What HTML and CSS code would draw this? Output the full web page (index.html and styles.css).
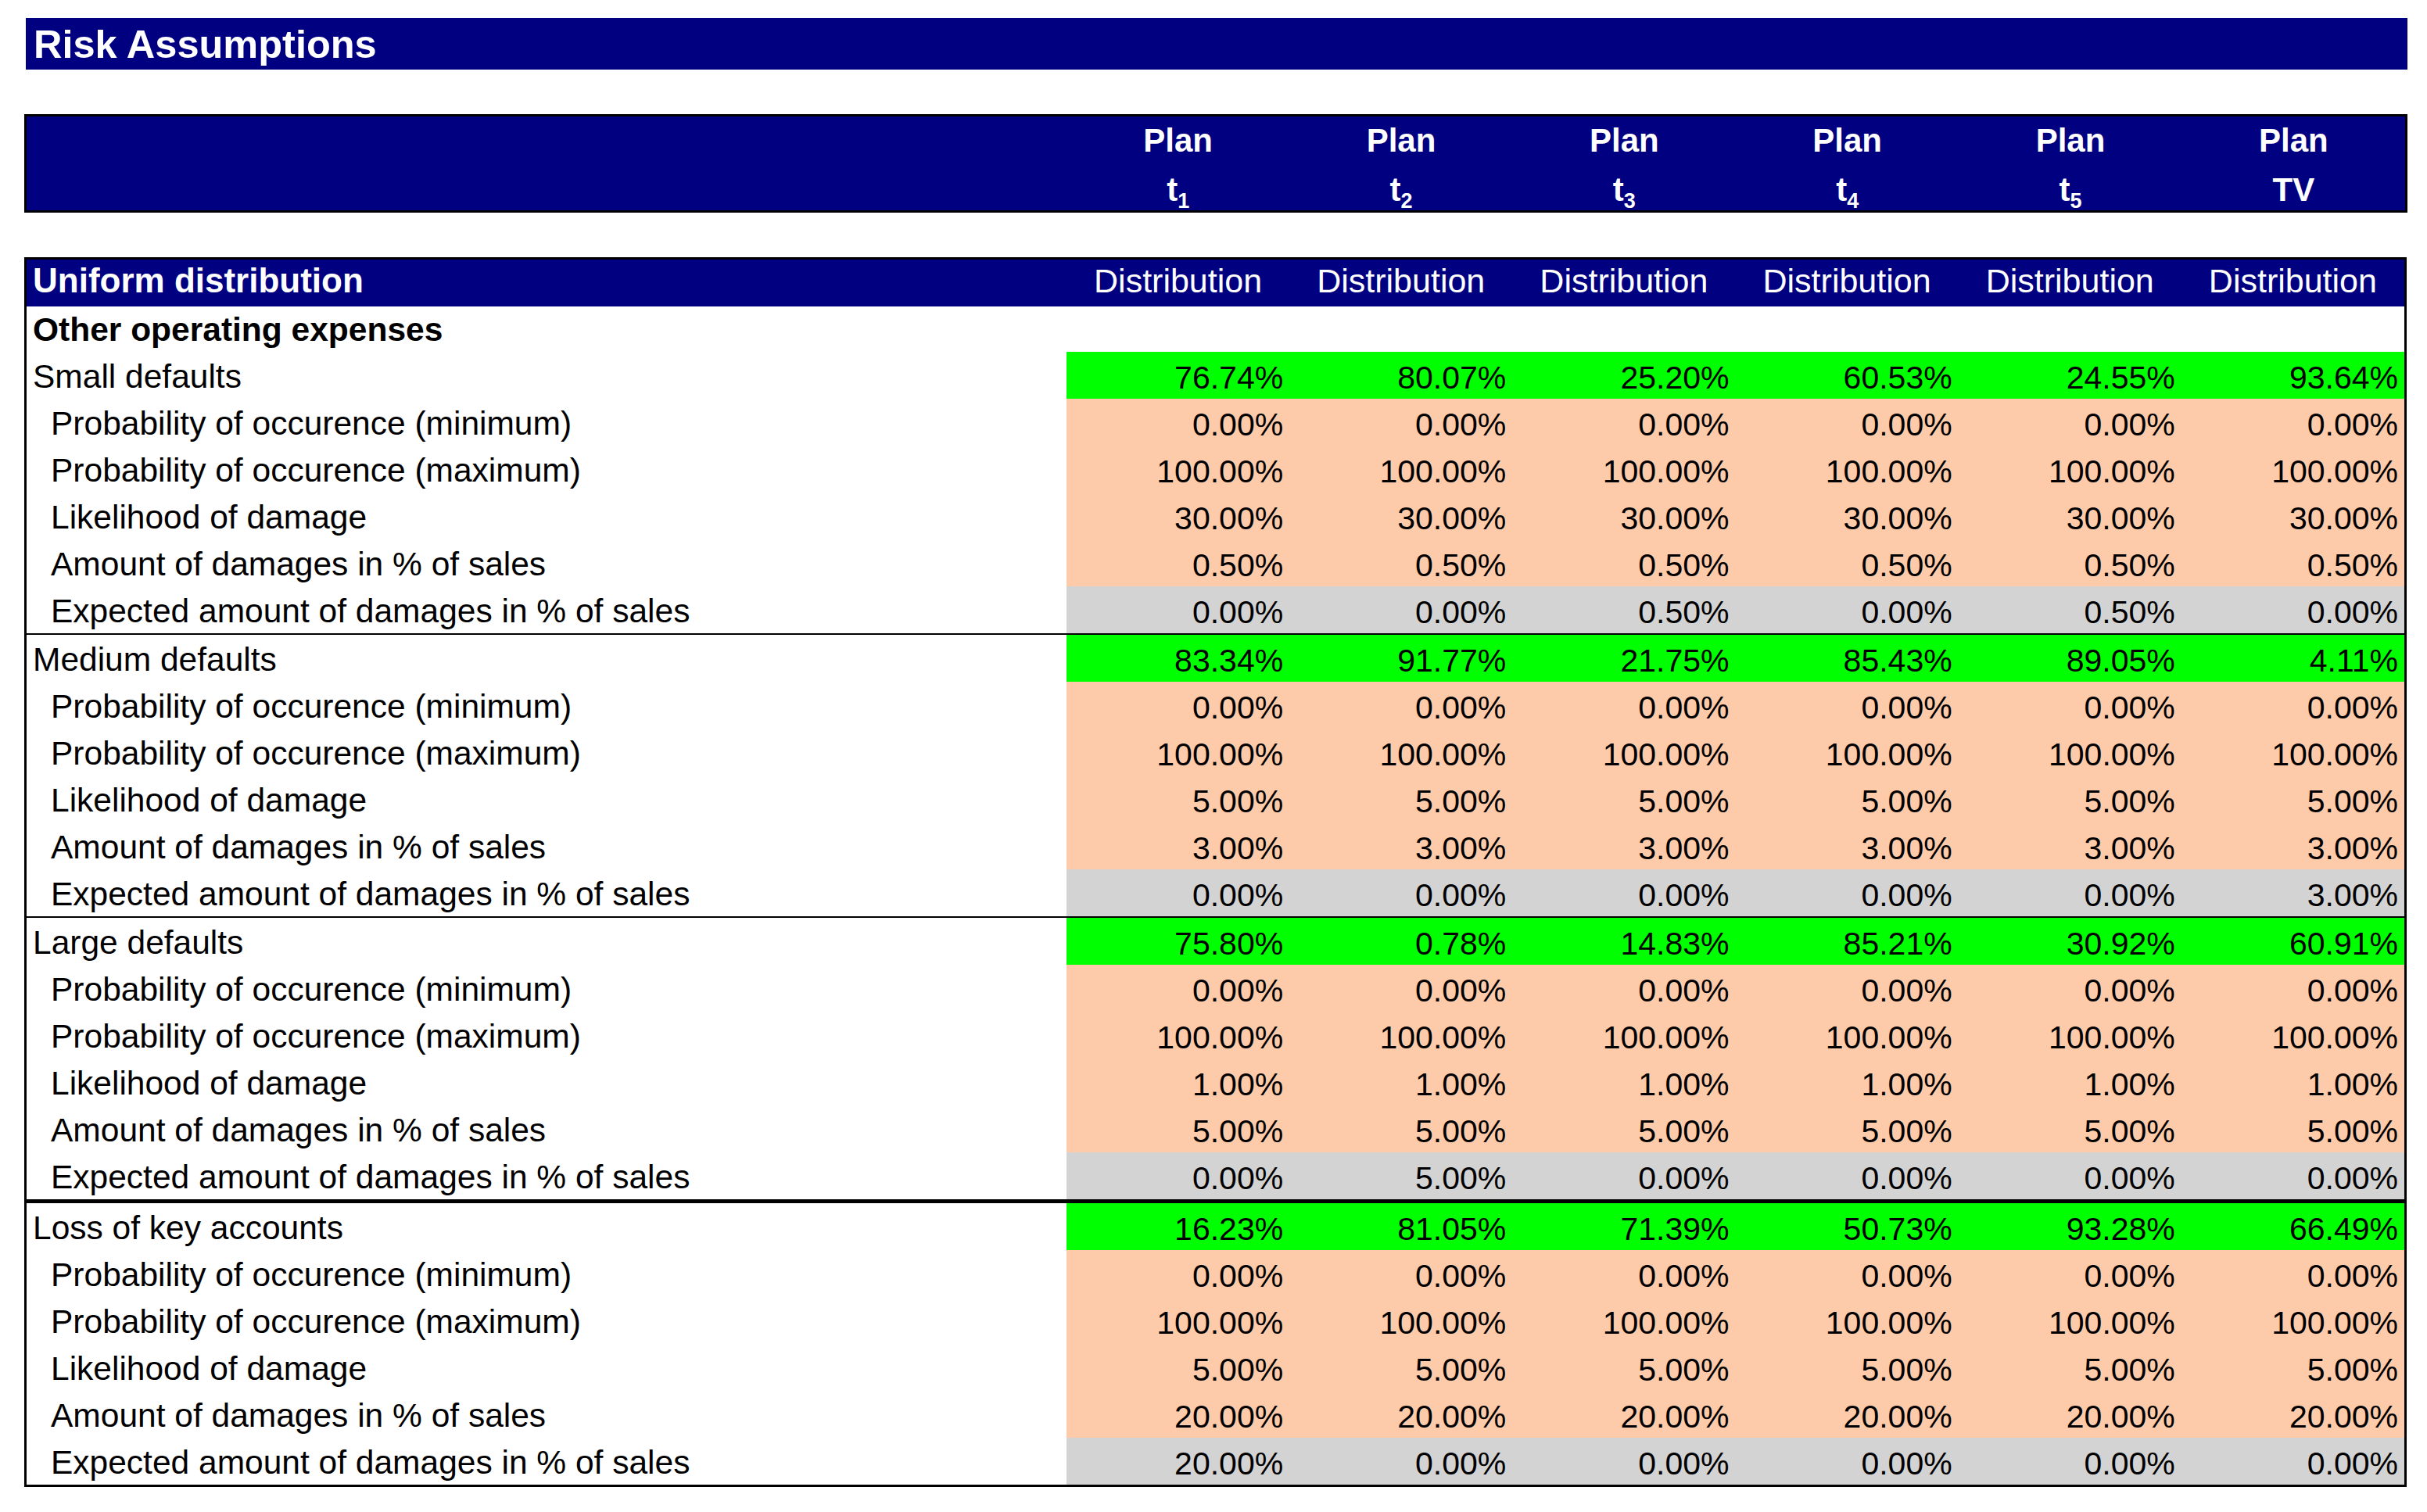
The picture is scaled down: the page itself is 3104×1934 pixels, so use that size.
FILE: index.html
```html
<!DOCTYPE html>
<html>
<head>
<meta charset="utf-8">
<title>Risk Assumptions</title>
<link rel="stylesheet" href="styles.css">
</head>
<body>
<div class="sheet">
  <div class="title">Risk Assumptions</div>

  <div class="plan-head">
    <div></div>
    <div class="plan-col"><span>Plan</span><span>t<sub>1</sub></span></div>
    <div class="plan-col"><span>Plan</span><span>t<sub>2</sub></span></div>
    <div class="plan-col"><span>Plan</span><span>t<sub>3</sub></span></div>
    <div class="plan-col"><span>Plan</span><span>t<sub>4</sub></span></div>
    <div class="plan-col"><span>Plan</span><span>t<sub>5</sub></span></div>
    <div class="plan-col"><span>Plan</span><span>TV</span></div>
  </div>

  <div class="table">
    <div class="hrow">
      <div class="hlbl">Uniform distribution</div>
      <div class="dist">Distribution</div>
      <div class="dist">Distribution</div>
      <div class="dist">Distribution</div>
      <div class="dist">Distribution</div>
      <div class="dist">Distribution</div>
      <div class="dist">Distribution</div>
    </div>
    <div class="row other">
      <div class="lbl bold">Other operating expenses</div>
    </div>

    <div class="grp">
      <div class="row"><div class="lbl">Small defaults</div><div class="c g">76.74%</div><div class="c g">80.07%</div><div class="c g">25.20%</div><div class="c g">60.53%</div><div class="c g">24.55%</div><div class="c g">93.64%</div></div>
      <div class="row"><div class="lbl ind">Probability of occurence (minimum)</div><div class="c p">0.00%</div><div class="c p">0.00%</div><div class="c p">0.00%</div><div class="c p">0.00%</div><div class="c p">0.00%</div><div class="c p">0.00%</div></div>
      <div class="row"><div class="lbl ind">Probability of occurence (maximum)</div><div class="c p">100.00%</div><div class="c p">100.00%</div><div class="c p">100.00%</div><div class="c p">100.00%</div><div class="c p">100.00%</div><div class="c p">100.00%</div></div>
      <div class="row"><div class="lbl ind">Likelihood of damage</div><div class="c p">30.00%</div><div class="c p">30.00%</div><div class="c p">30.00%</div><div class="c p">30.00%</div><div class="c p">30.00%</div><div class="c p">30.00%</div></div>
      <div class="row"><div class="lbl ind">Amount of damages in % of sales</div><div class="c p">0.50%</div><div class="c p">0.50%</div><div class="c p">0.50%</div><div class="c p">0.50%</div><div class="c p">0.50%</div><div class="c p">0.50%</div></div>
      <div class="row"><div class="lbl ind">Expected amount of damages in % of sales</div><div class="c x">0.00%</div><div class="c x">0.00%</div><div class="c x">0.50%</div><div class="c x">0.00%</div><div class="c x">0.50%</div><div class="c x">0.00%</div></div>
    </div>

    <div class="grp">
      <div class="row"><div class="lbl">Medium defaults</div><div class="c g">83.34%</div><div class="c g">91.77%</div><div class="c g">21.75%</div><div class="c g">85.43%</div><div class="c g">89.05%</div><div class="c g">4.11%</div></div>
      <div class="row"><div class="lbl ind">Probability of occurence (minimum)</div><div class="c p">0.00%</div><div class="c p">0.00%</div><div class="c p">0.00%</div><div class="c p">0.00%</div><div class="c p">0.00%</div><div class="c p">0.00%</div></div>
      <div class="row"><div class="lbl ind">Probability of occurence (maximum)</div><div class="c p">100.00%</div><div class="c p">100.00%</div><div class="c p">100.00%</div><div class="c p">100.00%</div><div class="c p">100.00%</div><div class="c p">100.00%</div></div>
      <div class="row"><div class="lbl ind">Likelihood of damage</div><div class="c p">5.00%</div><div class="c p">5.00%</div><div class="c p">5.00%</div><div class="c p">5.00%</div><div class="c p">5.00%</div><div class="c p">5.00%</div></div>
      <div class="row"><div class="lbl ind">Amount of damages in % of sales</div><div class="c p">3.00%</div><div class="c p">3.00%</div><div class="c p">3.00%</div><div class="c p">3.00%</div><div class="c p">3.00%</div><div class="c p">3.00%</div></div>
      <div class="row"><div class="lbl ind">Expected amount of damages in % of sales</div><div class="c x">0.00%</div><div class="c x">0.00%</div><div class="c x">0.00%</div><div class="c x">0.00%</div><div class="c x">0.00%</div><div class="c x">3.00%</div></div>
    </div>

    <div class="grp">
      <div class="row"><div class="lbl">Large defaults</div><div class="c g">75.80%</div><div class="c g">0.78%</div><div class="c g">14.83%</div><div class="c g">85.21%</div><div class="c g">30.92%</div><div class="c g">60.91%</div></div>
      <div class="row"><div class="lbl ind">Probability of occurence (minimum)</div><div class="c p">0.00%</div><div class="c p">0.00%</div><div class="c p">0.00%</div><div class="c p">0.00%</div><div class="c p">0.00%</div><div class="c p">0.00%</div></div>
      <div class="row"><div class="lbl ind">Probability of occurence (maximum)</div><div class="c p">100.00%</div><div class="c p">100.00%</div><div class="c p">100.00%</div><div class="c p">100.00%</div><div class="c p">100.00%</div><div class="c p">100.00%</div></div>
      <div class="row"><div class="lbl ind">Likelihood of damage</div><div class="c p">1.00%</div><div class="c p">1.00%</div><div class="c p">1.00%</div><div class="c p">1.00%</div><div class="c p">1.00%</div><div class="c p">1.00%</div></div>
      <div class="row"><div class="lbl ind">Amount of damages in % of sales</div><div class="c p">5.00%</div><div class="c p">5.00%</div><div class="c p">5.00%</div><div class="c p">5.00%</div><div class="c p">5.00%</div><div class="c p">5.00%</div></div>
      <div class="row"><div class="lbl ind">Expected amount of damages in % of sales</div><div class="c x">0.00%</div><div class="c x">5.00%</div><div class="c x">0.00%</div><div class="c x">0.00%</div><div class="c x">0.00%</div><div class="c x">0.00%</div></div>
    </div>

    <div class="grp thick">
      <div class="row"><div class="lbl">Loss of key accounts</div><div class="c g">16.23%</div><div class="c g">81.05%</div><div class="c g">71.39%</div><div class="c g">50.73%</div><div class="c g">93.28%</div><div class="c g">66.49%</div></div>
      <div class="row"><div class="lbl ind">Probability of occurence (minimum)</div><div class="c p">0.00%</div><div class="c p">0.00%</div><div class="c p">0.00%</div><div class="c p">0.00%</div><div class="c p">0.00%</div><div class="c p">0.00%</div></div>
      <div class="row"><div class="lbl ind">Probability of occurence (maximum)</div><div class="c p">100.00%</div><div class="c p">100.00%</div><div class="c p">100.00%</div><div class="c p">100.00%</div><div class="c p">100.00%</div><div class="c p">100.00%</div></div>
      <div class="row"><div class="lbl ind">Likelihood of damage</div><div class="c p">5.00%</div><div class="c p">5.00%</div><div class="c p">5.00%</div><div class="c p">5.00%</div><div class="c p">5.00%</div><div class="c p">5.00%</div></div>
      <div class="row"><div class="lbl ind">Amount of damages in % of sales</div><div class="c p">20.00%</div><div class="c p">20.00%</div><div class="c p">20.00%</div><div class="c p">20.00%</div><div class="c p">20.00%</div><div class="c p">20.00%</div></div>
      <div class="row"><div class="lbl ind">Expected amount of damages in % of sales</div><div class="c x">20.00%</div><div class="c x">0.00%</div><div class="c x">0.00%</div><div class="c x">0.00%</div><div class="c x">0.00%</div><div class="c x">0.00%</div></div>
    </div>
  </div>
</div>
</body>
</html>
```

FILE: styles.css
```css
* { box-sizing: border-box; }

body {
  margin: 0;
  background: #ffffff;
  font-family: "Liberation Sans", Arial, sans-serif;
  color: #000000;
}

.sheet {
  padding: 23px 0 0 31px;
  width: 3080px;
}

.title {
  margin-left: 2px;
  width: 3046px;
  height: 66px;
  background: #000080;
  color: #ffffff;
  font-weight: bold;
  font-size: 50.5px;
  line-height: 1;
  display: flex;
  align-items: flex-end;
  padding: 0 0 7px 10px;
}

.plan-head {
  margin-top: 57px;
  width: 3048px;
  height: 126px;
  border: 3px solid #000000;
  background: #000080;
  color: #ffffff;
  font-weight: bold;
  display: grid;
  grid-template-columns: 1330px repeat(6, 1fr);
}

.plan-col {
  display: flex;
  flex-direction: column;
  align-items: center;
  padding-top: 10px;
  gap: 21px;
  font-size: 42px;
  line-height: 42px;
  white-space: nowrap;
}

.plan-col sub {
  font-size: 27px;
  line-height: 0;
  vertical-align: -9px;
}

.table {
  margin-top: 57px;
  width: 3047px;
  border: 3px solid #000000;
}

.hrow {
  height: 60px;
  background: #000080;
  color: #ffffff;
  display: grid;
  grid-template-columns: 1330px repeat(6, 1fr);
}

.hlbl {
  display: flex;
  align-items: flex-end;
  padding: 0 0 11px 8px;
  font-size: 44px;
  font-weight: bold;
  line-height: 1;
  white-space: nowrap;
}

.dist {
  display: flex;
  align-items: flex-end;
  justify-content: center;
  padding-bottom: 11px;
  font-size: 43px;
  line-height: 1;
}

.row {
  height: 60px;
  display: grid;
  grid-template-columns: 1330px repeat(6, 1fr);
}

.row.other {
  height: 58px;
}

.grp + .grp {
  border-top: 2px solid #000000;
}

.grp.thick {
  border-top-width: 5px;
}

.lbl {
  display: flex;
  align-items: flex-end;
  padding: 0 0 7px 8px;
  font-size: 42.5px;
  line-height: 1;
  white-space: nowrap;
}

.lbl.ind {
  padding-left: 31px;
}

.lbl.bold {
  font-weight: bold;
}

.c {
  display: flex;
  align-items: flex-end;
  justify-content: flex-end;
  padding: 0 8px 6px 0;
  font-size: 41px;
  line-height: 1;
  white-space: nowrap;
}

.g { background: #00ff00; }
.p { background: #fecbaa; }
.x { background: #d3d3d3; }
```
